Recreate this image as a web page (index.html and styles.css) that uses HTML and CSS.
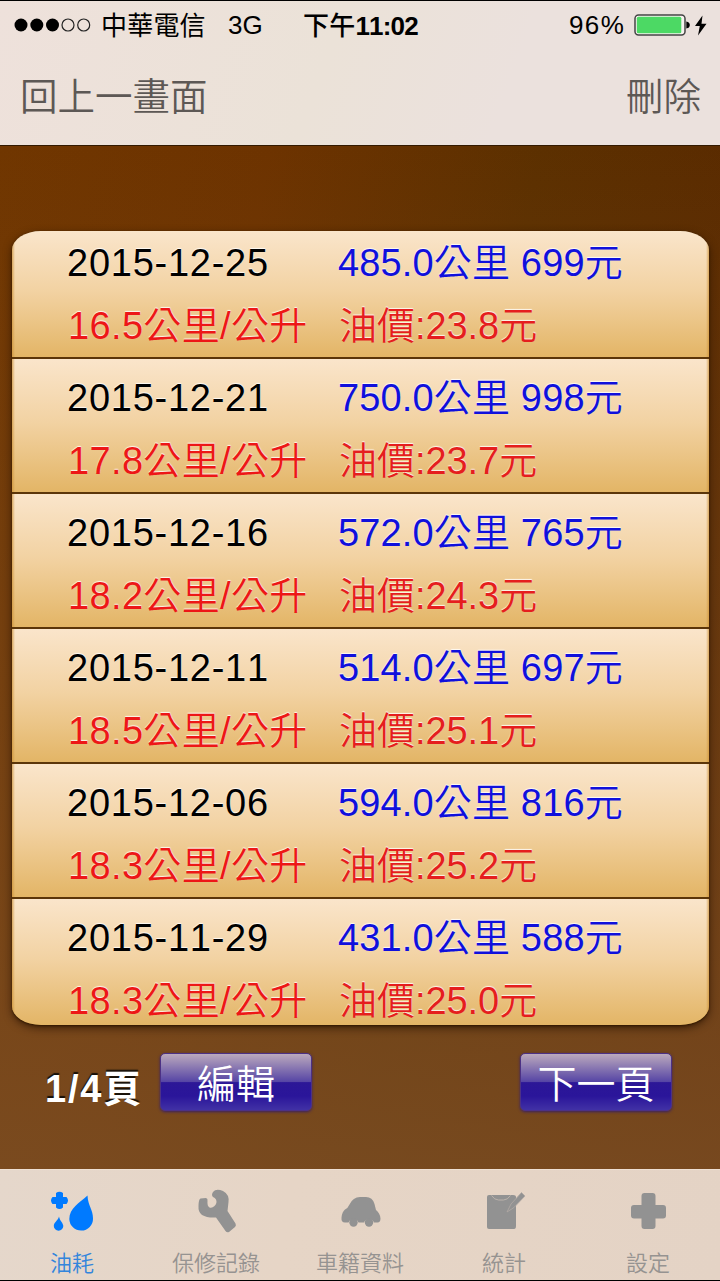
FILE: index.html
```html
<!DOCTYPE html>
<html lang="zh-Hant">
<head>
<meta charset="utf-8">
<title>油耗</title>
<link rel="stylesheet" href="styles.css">
</head>
<body>
<div class="screen">
  <header class="top">
    <div class="status">
      <svg class="signal" width="78" height="14" viewBox="0 0 78 14"><g fill="#000"><circle cx="7" cy="7" r="6.5"/><circle cx="22.8" cy="7" r="6.5"/><circle cx="38.5" cy="7" r="6.5"/></g><g fill="none" stroke="#222" stroke-width="1.2"><circle cx="54" cy="7" r="6"/><circle cx="69.7" cy="7" r="6"/></g></svg>
      <span class="carrier">中華電信</span>
      <span class="network">3G</span>
      <span class="clock">下午<b>11:02</b></span>
      <span class="percent">96%</span>
      <svg class="battery" width="74" height="24" viewBox="0 0 74 24"><rect x="1" y="2" width="50" height="20" rx="3.5" fill="#f6f3ef" stroke="#444" stroke-width="1.5"/><rect x="2.8" y="3.8" width="44.5" height="16.4" rx="1.5" fill="#4cd964"/><path d="M52.3 8.5q3.5.5 3.5 3.5t-3.500 3.500z"/><path d="M68.500 2.500 61 13h4.800L64 22.500 72.500 10.700h-5z"/></svg>
    </div>
    <nav class="navbar"><span>回上一畫面</span><span>刪除</span></nav>
  </header>
  <main class="content">
    <ul class="records">
      <li class="record"><span class="date">2015-12-25</span><span class="trip">485.0公里 699元</span><span class="economy">16.5公里/公升</span><span class="price">油價:23.8元</span></li>
      <li class="record"><span class="date">2015-12-21</span><span class="trip">750.0公里 998元</span><span class="economy">17.8公里/公升</span><span class="price">油價:23.7元</span></li>
      <li class="record"><span class="date">2015-12-16</span><span class="trip">572.0公里 765元</span><span class="economy">18.2公里/公升</span><span class="price">油價:24.3元</span></li>
      <li class="record"><span class="date">2015-12-11</span><span class="trip">514.0公里 697元</span><span class="economy">18.5公里/公升</span><span class="price">油價:25.1元</span></li>
      <li class="record"><span class="date">2015-12-06</span><span class="trip">594.0公里 816元</span><span class="economy">18.3公里/公升</span><span class="price">油價:25.2元</span></li>
      <li class="record"><span class="date">2015-11-29</span><span class="trip">431.0公里 588元</span><span class="economy">18.3公里/公升</span><span class="price">油價:25.0元</span></li>
    </ul>
    <div class="pager">
      <span class="page">1/4頁</span>
      <button class="button">編輯</button>
      <button class="button next">下一頁</button>
    </div>
  </main>
  <footer class="tabs">
    <div class="tab active">
      <svg class="icon" viewBox="0 0 48 48"><path d="M8 5q3.500-2.500 7 0v4h3.500q3 3.500 0 7H15v3.500q-3.500 3-7 0V16H4.500q-3-3.500 0-7H8z"/><path d="M39.500 7.500C40 18 45 21.500 45 30.500A11.800 11.800 0 0 1 21.300 31C21.300 20 31.500 15 39.500 7.500z"/><path d="M11 28.500c.8 4.500 4.300 6.500 4.300 9.500a4.700 4.700 0 0 1-9.500 0c0-3.500 4.200-5.500 5.200-9.500z"/></svg>
      <span>油耗</span>
    </div>
    <div class="tab">
      <svg class="icon" viewBox="0 0 48 48"><path d="M21 4q3-4 10-1 6.500 3.500 5.500 11l-1 9 8 12.500q1 2-.5 3.500l-6 5q-2 1-3.500-1L24 29.500q-9 .5-14-2.500-4-3-3.500-9 0-6.500 2-7.500l5.500-.500q2 .5 1.500 3-.5 5 2 6.500 2.500 1 5-1.500 3-3 1.500-6.500-1-2-3-2.500-2-2 0-5z"/></svg>
      <span>保修記錄</span>
    </div>
    <div class="tab">
      <svg class="icon" viewBox="0 0 48 48"><path d="M13.500 16.500Q17 9 24 9h6q6.500 0 8.500 7l1.500 6q4 3 4.500 8.500 0 4-3 4h-3.500a5.500 5.500 0 0 0-10 0h-5.500a5.500 5.500 0 0 0-10 0H9q-4 0-3.500-5Q6 24 9 21.500q3-1.500 4.500-5z"/><circle cx="17.500" cy="34.500" r="4.200"/><circle cx="33" cy="34.500" r="4.200"/></svg>
      <span>車籍資料</span>
    </div>
    <div class="tab">
      <svg class="icon" viewBox="0 0 48 48"><path d="M9 7h24q3 0 3 2v29q0 3-2 3H9q-2 0-2-2V9q0-2 2-2z"/><path d="M11.500 7.500q3 4.500 7 4.500h5q4 0 7-4.500" fill="none" stroke="#bbb2ab" stroke-width="1"/><path class="pencil" d="M41.500 4.500 45 8 34 19.500 27 24l4-8z"/></svg>
      <span>統計</span>
    </div>
    <div class="tab">
      <svg class="icon" viewBox="0 0 48 48"><path d="M20.500 5h8q3 0 3 3v9h7.500q3 0 3 3v7.500q0 3-3 3h-7.500V38q0 3-3 3h-8q-3 0-3-3v-7.500H10q-3 0-3-3V20q0-3 3-3h7.500V8q0-3 3-3z"/></svg>
      <span>設定</span>
    </div>
  </footer>
</div>
</body>
</html>
```

FILE: styles.css
```css
* { box-sizing: border-box; }
body { margin: 0; font-family: "Liberation Sans", "Noto Sans CJK TC", sans-serif; font-weight: 350; font-kerning: none; }
.screen { width: 720px; height: 1281px; display: flex; flex-direction: column; overflow: hidden; border-bottom: 1px solid #000; }
.top { height: 145px; flex: none; border-top: 1px solid #000; background: linear-gradient(110deg, #eee1db, #ebe2d8 45%, #ebe1dd 70%); }
.status { height: 48px; display: flex; align-items: center; padding-left: 14px; font-size: 26px; white-space: nowrap; }
.signal { flex: none; }
.carrier { width: 127px; margin-left: 9px; padding-bottom: 4px; font-weight: 400; letter-spacing: .2px; }
.network { width: 75px; }
.clock { width: 266px; font-weight: 500; letter-spacing: .2px; padding-bottom: 4px; }
.clock b { font-weight: 700; letter-spacing: -.8px; }
.percent { width: 65px; letter-spacing: 1.4px; }
.battery { flex: none; }
.navbar { height: 88px; display: flex; justify-content: space-between; align-items: center; padding: 0 19px 0 20px; font-size: 37.500px; color: #5d5855; }
.content { flex: none; height: 1024px; padding: 85px 11px 0; border-top: 1px solid #321900;
  background: linear-gradient(180deg, rgba(126,84,45,0), rgba(124,78,36,.85)), linear-gradient(100deg, #703600, #6d3300 30%, #5c3000 60%, #592700); }
.records { list-style: none; margin: 0 0 0 1px; padding: 0; width: 697px; height: 794px; border-radius: 29px / 19px; overflow: hidden; background: #5b3509; box-shadow: 0 1px 2px #321800, 0 3px 8px rgba(35,15,0,.7); display: flex; flex-direction: column; gap: 2px; }
.record { height: 133px; flex: none; display: grid; grid-template-columns: 271px 1fr; grid-template-rows: 63px 62px; padding: 8px 0 0 55px; font-size: 38px; line-height: 62px; white-space: nowrap; text-shadow: 0 -1px 1px rgba(255,255,255,.85);
  background: linear-gradient(90deg, rgba(204,145,55,.7), rgba(204,145,55,0) 3px, rgba(204,145,55,0) 694px, rgba(204,145,55,.7)), linear-gradient(#fae5cb, #f2d2a2 48%, #e3b566); }
.record:first-child { height: 126px; padding-top: 1px; }
.record:last-child { height: 126px; }
.date { color: #000; letter-spacing: .75px; }
.trip { color: #1010dc; letter-spacing: .15px; }
.economy { color: #ed1717; padding-left: 1px; letter-spacing: .35px; }
.price { color: #e51e1e; padding-left: 1px; letter-spacing: -.05px; }
.pager { display: flex; margin-top: 28px; padding-left: 34px; }
.page { width: 115px; font-size: 38px; line-height: 72px; font-weight: 700; letter-spacing: 1.8px; color: #fff; text-shadow: 0 -2px 1px #161008; }
.button { width: 152px; height: 58px; padding: 0 0 2px; border: 1px solid #4c3185; border-radius: 5px; font: 350 39px "Noto Sans CJK TC", sans-serif; line-height: 54px; color: #fff; background: linear-gradient(#bba9bd, #5544a5 50%, #2c1797 51%, #2a159a 75%, #4131a5); box-shadow: 0 1px 3px #392064; }
.next { margin-left: 208px; }
.tabs { height: 111px; flex: none; display: grid; grid-template-columns: repeat(5, 144px); border-top: 1px solid #eee0d4; background: linear-gradient(100deg, #e5d7cb, #e6d5c6 40%, #e4d3c5); }
.tab { display: flex; flex-direction: column; align-items: center; padding-top: 18px; font-size: 22px; line-height: 30px; color: #969391; }
.tab.active { color: #3385dc; }
.icon { width: 48px; height: 48px; margin-bottom: 13px; fill: #929292; }
.active .icon { fill: #007aff; }
.pencil { stroke: #b2aaa4; stroke-width: .8; }
```
